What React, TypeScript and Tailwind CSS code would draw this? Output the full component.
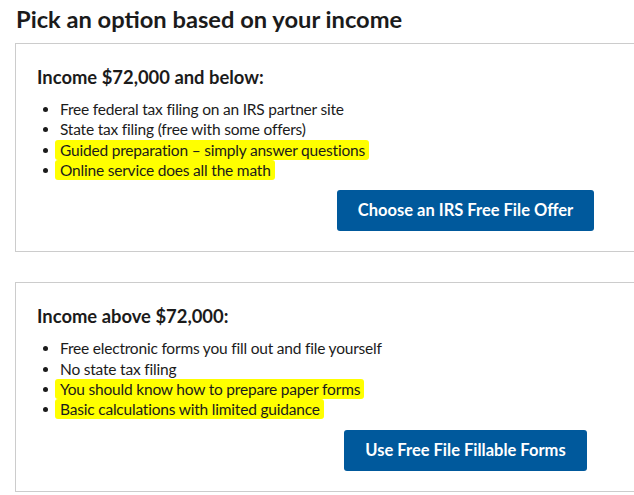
const incomeOptions = [
  {
    heading: "Income $72,000 and below:",
    items: [
      { text: "Free federal tax filing on an IRS partner site" },
      { text: "State tax filing (free with some offers)" },
      { text: "Guided preparation – simply answer questions", marked: true },
      { text: "Online service does all the math", marked: true },
    ],
    cta: "Choose an IRS Free File Offer",
  },
  {
    heading: "Income above $72,000:",
    items: [
      { text: "Free electronic forms you fill out and file yourself" },
      { text: "No state tax filing" },
      { text: "You should know how to prepare paper forms", marked: true },
      { text: "Basic calculations with limited guidance", marked: true },
    ],
    cta: "Use Free File Fillable Forms",
  },
];

export default function App() {
  return (
    <div className="min-h-screen bg-white pl-[15px] font-['Lato','Liberation_Sans',sans-serif] text-[#1b1b1b]">
      <h2 className="pt-[4px] pl-[1px] text-[23.7px] leading-[30px] font-bold">
        Pick an option based on your income
      </h2>

      <div className="mt-[9px] space-y-[30px]">
        {incomeOptions.map((option) => (
          <div
            key={option.heading}
            className="border border-r-0 border-[#cccccc] pt-[21px] pb-[20px] pl-[21px]"
          >
            <h3 className="text-[18.4px] leading-[24px] font-bold">{option.heading}</h3>

            <ul className="mt-[10px] list-disc pl-[23px] text-[15.5px] leading-[20.33px] tracking-[-0.2px]">
              {option.items.map((item) => (
                <li key={item.text}>
                  {item.marked ? (
                    <span className="-ml-[5px] rounded-[3px] bg-[#ffff00] pt-[1px] pr-[4px] pb-[1px] pl-[5px]">
                      {item.text}
                    </span>
                  ) : (
                    item.text
                  )}
                </li>
              ))}
            </ul>

            <div className="mt-[10px] ml-[260px] flex justify-center">
              <button
                type="button"
                className="h-[41px] rounded-[3px] bg-[#00599c] px-[21px] text-[16.5px] font-bold text-white"
              >
                {option.cta}
              </button>
            </div>
          </div>
        ))}
      </div>
    </div>
  );
}
